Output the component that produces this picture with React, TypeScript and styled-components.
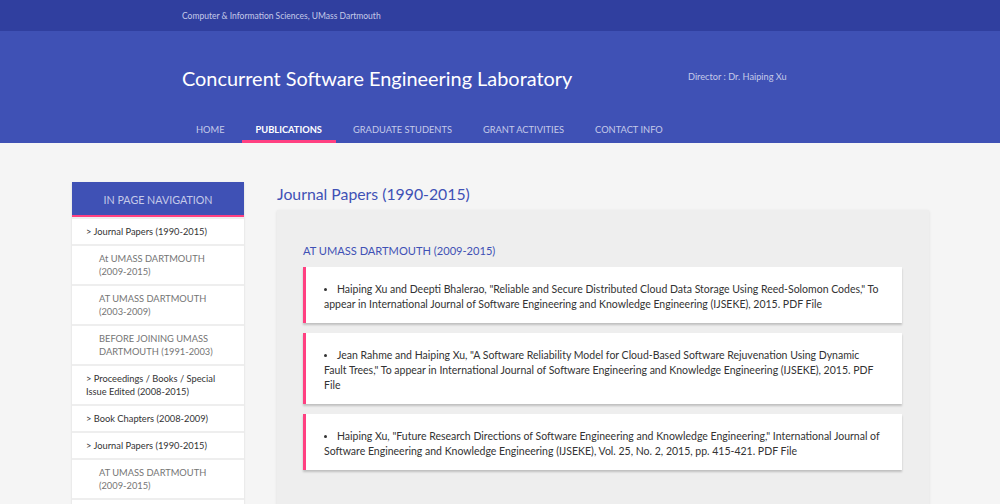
import React from "react";
import styled, { createGlobalStyle } from "styled-components";

const Global = createGlobalStyle`
  html, body { margin: 0; padding: 0; }
  body {
    background: #f5f5f5;
    font-family: Lato, "Open Sans", sans-serif;
    color: #333;
  }
  * { box-sizing: border-box; }
`;

const TopBar = styled.div`
  height: 31px;
  background: #303f9f;
  display: flex;
  align-items: center;
  padding-left: 182px;
  color: #c5cae9;
  font-size: 8.5px;
`;

const Header = styled.header`
  height: 112px;
  background: #3f51b5;
  display: flex;
  flex-direction: column;
`;

const TitleRow = styled.div`
  display: flex;
  align-items: center;
  height: 91px;
  padding-left: 182px;
`;

const SiteTitle = styled.h1`
  margin: 0;
  font-weight: 400;
  font-size: 19.9px;
  color: #fff;
  width: 506px;
  position: relative;
  top: 1px;
`;

const Director = styled.div`
  font-size: 9.2px;
  color: #c5cae9;
`;

const Nav = styled.nav`
  display: flex;
  gap: 3px;
  padding-left: 182px;
  height: 21px;
`;

const NavItem = styled.a<{ $active?: boolean }>`
  display: block;
  padding: 1px 14px 3px;
  font-size: 9.3px;
  text-transform: uppercase;
  color: ${(p) => (p.$active ? "#fff" : "#c5cae9")};
  font-weight: ${(p) => (p.$active ? 700 : 400)};
  border-bottom: 3px solid ${(p) => (p.$active ? "#ff4081" : "transparent")};
  line-height: 14px;
`;

const Body = styled.div`
  display: flex;
  align-items: flex-start;
  padding: 39px 0 0 72px;
  gap: 33px;
`;

const Sidebar = styled.aside`
  width: 172px;
  background: #eee;
  display: flex;
  flex-direction: column;
  gap: 2px;
  box-shadow: 0 1px 2px rgba(0, 0, 0, 0.12);
`;

const SideHead = styled.div`
  height: 35px;
  background: #3f51b5;
  border-bottom: 2px solid #ff4081;
  color: #c5cae9;
  font-size: 10.7px;
  display: flex;
  align-items: center;
  justify-content: center;
  padding-top: 1px;
`;

const SideItem = styled.div<{ $sub?: boolean }>`
  background: #fff;
  font-size: 9.3px;
  line-height: 13px;
  padding: 6px 14px 6px ${(p) => (p.$sub ? "27px" : "14px")};
  color: ${(p) => (p.$sub ? "#757575" : "#333")};
`;

const Main = styled.main`
  width: 652px;
`;

const PageTitle = styled.h2`
  margin: 0;
  font-weight: 400;
  font-size: 15.8px;
  color: #3f51b5;
  height: 28px;
  line-height: 24px;
`;

const Panel = styled.section`
  background: #eee;
  box-shadow: 0 1px 3px rgba(0, 0, 0, 0.1);
  padding: 34px 27px 40px 26px;
  min-height: 300px;
`;

const SubHead = styled.h3`
  margin: 0 0 9px;
  font-weight: 400;
  font-size: 11.1px;
  color: #3f51b5;
  line-height: 14px;
`;

const Cards = styled.div`
  display: flex;
  flex-direction: column;
  gap: 10px;
`;

const Card = styled.ul`
  margin: 0;
  background: #fff;
  border-left: 3px solid #ff4081;
  box-shadow: 0 2px 2px rgba(0, 0, 0, 0.2);
  padding: 15px 20px 11px 18px;
  list-style: disc inside;
  font-size: 10.5px;
  line-height: 15px;
  color: #333;
`;

const CardItem = styled.li`
  &::marker {
    font-size: 9px;
  }
`;

const navItems = ["Home", "Publications", "Graduate Students", "Grant Activities", "Contact Info"];

const side: { t: string; sub?: boolean }[] = [
  { t: "> Journal Papers (1990-2015)" },
  { t: "At UMASS DARTMOUTH (2009-2015)", sub: true },
  { t: "AT UMASS DARTMOUTH (2003-2009)", sub: true },
  { t: "BEFORE JOINING UMASS DARTMOUTH (1991-2003)", sub: true },
  { t: "> Proceedings / Books / Special Issue Edited (2008-2015)" },
  { t: "> Book Chapters (2008-2009)" },
  { t: "> Journal Papers (1990-2015)" },
  { t: "AT UMASS DARTMOUTH (2009-2015)", sub: true },
  { t: "AT UMASS DARTMOUTH (2003-2009)", sub: true },
];

const papers = [
  'Haiping Xu and Deepti Bhalerao, "Reliable and Secure Distributed Cloud Data Storage Using Reed-Solomon Codes," To appear in International Journal of Software Engineering and Knowledge Engineering (IJSEKE), 2015. PDF File',
  'Jean Rahme and Haiping Xu, "A Software Reliability Model for Cloud-Based Software Rejuvenation Using Dynamic Fault Trees," To appear in International Journal of Software Engineering and Knowledge Engineering (IJSEKE), 2015. PDF File',
  'Haiping Xu, "Future Research Directions of Software Engineering and Knowledge Engineering," International Journal of Software Engineering and Knowledge Engineering (IJSEKE), Vol. 25, No. 2, 2015, pp. 415-421. PDF File',
];

export default function App() {
  return (
    <>
      <Global />
      <TopBar>Computer &amp; Information Sciences, UMass Dartmouth</TopBar>
      <Header>
        <TitleRow>
          <SiteTitle>Concurrent Software Engineering Laboratory</SiteTitle>
          <Director>Director : Dr. Haiping Xu</Director>
        </TitleRow>
        <Nav>
          {navItems.map((n, i) => (
            <NavItem key={n} $active={i === 1}>
              {n}
            </NavItem>
          ))}
        </Nav>
      </Header>
      <Body>
        <Sidebar>
          <SideHead>IN PAGE NAVIGATION</SideHead>
          {side.map((s, i) => (
            <SideItem key={i} $sub={s.sub}>
              {s.t}
            </SideItem>
          ))}
        </Sidebar>
        <Main>
          <PageTitle>Journal Papers (1990-2015)</PageTitle>
          <Panel>
            <SubHead>AT UMASS DARTMOUTH (2009-2015)</SubHead>
            <Cards>
              {papers.map((p, i) => (
                <Card key={i}>
                  <CardItem>{p}</CardItem>
                </Card>
              ))}
            </Cards>
          </Panel>
        </Main>
      </Body>
    </>
  );
}
